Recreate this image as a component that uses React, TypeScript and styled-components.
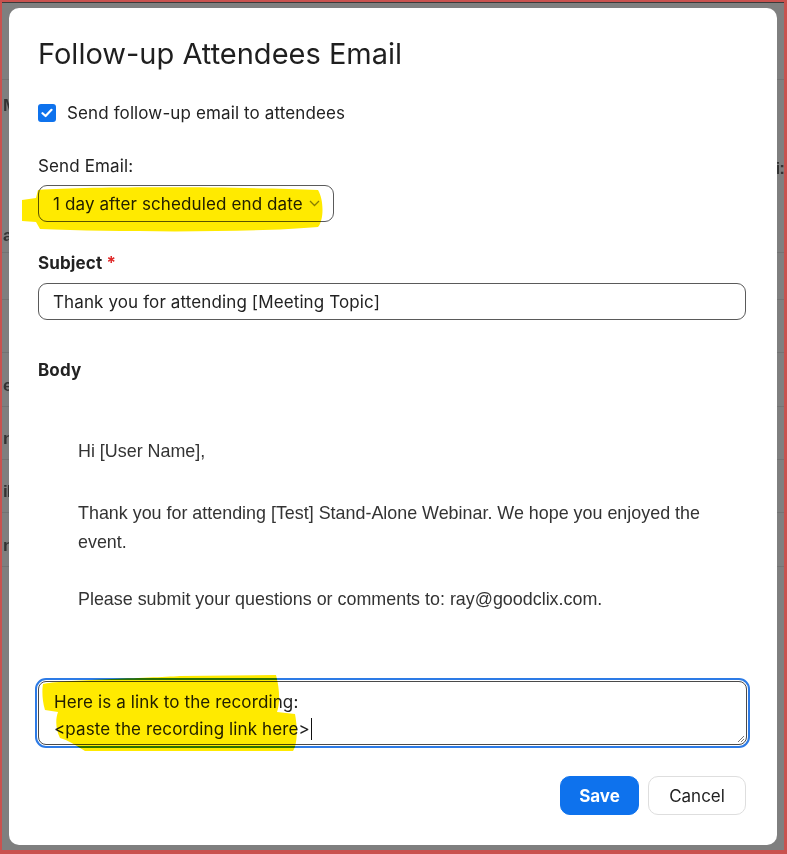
import React from 'react';
import styled, { createGlobalStyle } from 'styled-components';

const GlobalStyle = createGlobalStyle`
  * { box-sizing: border-box; }
  body {
    margin: 0;
    font-family: Inter, "Noto Sans", sans-serif;
    color: #222;
  }
`;

const Frame = styled.div`
  position: relative;
  width: 787px;
  height: 854px;
  border: solid #c9524f;
  border-width: 2px 3px 4px 2px;
  background: #7f7f7f;
  box-shadow: inset 0 1px 0 #3a3a3a;
  overflow: hidden;
`;

// page behind the dimmed overlay
const Backdrop = styled.div`
  display: flex;
  flex-direction: column;
  padding-top: 77px;
`;

const BackRow = styled.div<{ $h: number; $line?: boolean }>`
  display: flex;
  justify-content: space-between;
  align-items: center;
  height: ${(p) => p.$h}px;
  border-top: 1px solid ${(p) => (p.$line ? '#737373' : 'transparent')};
  padding: 12px 0 0 1px;
  font-family: "Liberation Sans", Arial, sans-serif;
  font-size: 17px;
  font-weight: bold;
  letter-spacing: -1px;
  color: #333;
`;

const Modal = styled.div`
  position: absolute;
  left: 7px;
  top: 6px;
  width: 768px;
  height: 837px;
  background: #fff;
  border-radius: 10px;
  padding: 28px 31px 0 29px;
  display: flex;
  flex-direction: column;
  letter-spacing: 0.12px;
`;

const Title = styled.h1`
  margin: 0;
  font-size: 29px;
  line-height: 36px;
  font-weight: 400;
  letter-spacing: 0;
  color: #1f1f1f;
`;

const CheckRow = styled.label`
  display: flex;
  align-items: center;
  gap: 11px;
  margin-top: 29px;
  height: 24px;
  font-size: 17px;
`;

const Box = styled.span`
  width: 18px;
  height: 18px;
  border-radius: 3px;
  background: #0e72ed;
  display: flex;
  align-items: center;
  justify-content: center;
`;

const Label = styled.div<{ $top: number; $bold?: boolean }>`
  margin-top: ${(p) => p.$top}px;
  font-size: 17px;
  line-height: 20px;
  font-weight: ${(p) => (p.$bold ? 700 : 400)};
  color: #222;
`;

const Star = styled.span`
  color: #e02828;
`;

const Field = styled.div<{ $width?: string; $top: number }>`
  margin-top: ${(p) => p.$top}px;
  width: ${(p) => p.$width || '100%'};
  height: 37px;
  border: 1px solid #5a5a5a;
  border-radius: 9px;
  padding: 0 13px 0 14px;
  display: flex;
  align-items: center;
  justify-content: space-between;
  font-size: 17px;
  color: #222;
`;

const EmailBody = styled.div`
  margin-top: 57px;
  padding-left: 40px;
  font-family: "Liberation Sans", Arial, sans-serif;
  font-size: 17.9px;
  line-height: 29px;
  letter-spacing: 0;
  color: #333;
`;

const Para = styled.p<{ $after: number }>`
  margin: 0 0 ${(p) => p.$after}px;
`;

const Ring = styled.div`
  margin: 64px -4px 0 -3px;
  border: 2px solid #2d7be6;
  border-radius: 11px;
  padding: 1px;
`;

const Area = styled.div`
  position: relative;
  height: 64px;
  border: 1px solid #4a4a4a;
  border-radius: 8px;
  padding: 7px 15px 0;
  font-size: 17px;
  line-height: 27px;
  color: #222;
`;

const Caret = styled.span`
  display: inline-block;
  width: 1px;
  height: 22px;
  margin-left: 1px;
  background: #111;
  vertical-align: -5px;
`;

const Grip = styled.svg`
  position: absolute;
  right: 1px;
  bottom: 1px;
`;

const Actions = styled.div`
  display: flex;
  justify-content: flex-end;
  gap: 9px;
  margin-top: 28px;
`;

const Button = styled.button<{ $primary?: boolean }>`
  width: ${(p) => (p.$primary ? 79 : 98)}px;
  height: 39px;
  padding: 0;
  border-radius: 10px;
  font-family: Inter, "Noto Sans", sans-serif;
  font-size: 17px;
  font-weight: ${(p) => (p.$primary ? 700 : 400)};
  background: ${(p) => (p.$primary ? '#0e72ed' : '#fff')};
  color: ${(p) => (p.$primary ? '#fff' : '#222')};
  border: 1px solid ${(p) => (p.$primary ? '#0e72ed' : '#dedede')};
`;

const Marker = styled.svg`
  position: absolute;
  left: -2px;
  top: -2px;
  pointer-events: none;
  mix-blend-mode: multiply;
`;

const backRows = [
  { h: 40, left: 'M', right: '', line: true },
  { h: 87, left: '', right: 'i:', line: false },
  { h: 46, left: 'a', right: '', line: false },
  { h: 47, left: '', right: '', line: true },
  { h: 53, left: '', right: '', line: true },
  { h: 54, left: 'e', right: '', line: true },
  { h: 53, left: 'ni', right: '', line: true },
  { h: 53, left: 'il', right: '', line: true },
  { h: 54, left: 'ni', right: '', line: true },
  { h: 300, left: '', right: '', line: true },
];

export default function App() {
  return (
    <>
      <GlobalStyle />
      <Frame>
        <Backdrop>
          {backRows.map((r, i) => (
            <BackRow key={i} $h={r.h} $line={r.line}>
              <span>{r.left}</span>
              <span>{r.right}</span>
            </BackRow>
          ))}
        </Backdrop>

        <Modal>
          <Title>Follow-up Attendees Email</Title>

          <CheckRow>
            <Box>
              <svg width="12" height="10" viewBox="0 0 12 10">
                <path d="M1.5 5.2 L4.6 8 L10.5 1.8" fill="none" stroke="#fff" strokeWidth="2.2" strokeLinecap="round" strokeLinejoin="round" />
              </svg>
            </Box>
            Send follow-up email to attendees
          </CheckRow>

          <Label $top={31}>Send Email:</Label>
          <Field $top={9} $width="296px">
            <span>1 day after scheduled end date</span>
            <svg width="11" height="7" viewBox="0 0 11 7">
              <path d="M1 1 L5.5 5.5 L10 1" fill="none" stroke="#8a8a8a" strokeWidth="1.3" />
            </svg>
          </Field>

          <Label $top={31} $bold>
            Subject <Star>*</Star>
          </Label>
          <Field $top={10}>Thank you for attending [Meeting Topic]</Field>

          <Label $top={40} $bold>Body</Label>

          <EmailBody>
            <Para $after={33}>Hi [User Name],</Para>
            <Para $after={28}>
              Thank you for attending [Test] Stand-Alone Webinar. We hope you enjoyed the
              <br />
              event.
            </Para>
            <Para $after={0}>Please submit your questions or comments to: ray@goodclix.com.</Para>
          </EmailBody>

          <Ring>
            <Area>
              Here is a link to the recording:
              <br />
              &lt;paste the recording link here&gt;<Caret />
              <Grip width="8" height="8" viewBox="0 0 8 8">
                <path d="M7 1 L1 7 M7 4 L4 7" stroke="#777" strokeWidth="1" />
              </Grip>
            </Area>
          </Ring>

          <Actions>
            <Button $primary>Save</Button>
            <Button>Cancel</Button>
          </Actions>
        </Modal>

        <Marker width="787" height="854" viewBox="0 0 787 854">
          <path
            d="M22 200 L36 198 L38 190 C100 186 250 187 318 190 C324 200 324 220 318 227 C250 233 120 232 40 229 L36 222 L22 221 Z"
            fill="#ffea00"
          />
          <path
            d="M43 684 C60 680 150 678 180 676 L276 675 C280 690 280 704 277 712 L295 714 C298 730 297 745 293 751 L85 751 C75 745 68 740 60 738 C56 730 55 720 58 712 L45 710 C42 700 42 690 43 684 Z"
            fill="#ffea00"
          />
        </Marker>
      </Frame>
    </>
  );
}
